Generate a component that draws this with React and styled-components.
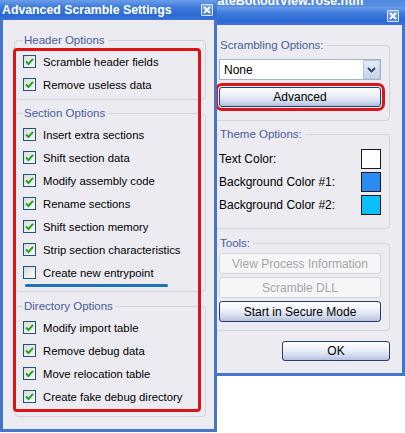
import React from 'react';
import styled, { createGlobalStyle } from 'styled-components';

const GlobalStyle = createGlobalStyle`
	html, body {
		margin: 0;
		padding: 0;
		background: #fff;
		overflow: hidden;
	}
	body {
		font-family: "Liberation Sans", Arial, sans-serif;
		font-size: 12px;
		color: #000;
	}
`;

const Desktop = styled.div`
	position: relative;
	width: 405px;
	height: 433px;
	overflow: hidden;
	background: #fff;
`;

const Window = styled.div`
	position: absolute;
	left: ${p => p.$left}px;
	top: ${p => p.$top}px;
	width: ${p => p.$width}px;
	height: ${p => p.$height}px;
	z-index: ${p => p.$z};
	display: flex;
	flex-direction: column;
`;

const TitleBar = styled.div`
	flex: 0 0 ${p => p.$h}px;
	display: flex;
	align-items: center;
	justify-content: space-between;
	padding: 0 ${p => p.$pr}px 0 2px;
	background: linear-gradient(#6a9ee9 0%, #3f7bdc 35%, #2d69d3 75%, #3a74d8 100%);
	color: #fff;
	font-weight: bold;
	font-size: 12.3px;
	white-space: nowrap;
	overflow: hidden;
`;

const BackTitle = styled(TitleBar)`
	align-items: flex-end;
	padding: 0 0 1px 14px;
	background: linear-gradient(#3f7bdc, #5b90e2);
	font-size: 12.5px;
	line-height: 12px;
`;

const CloseBtn = styled.span`
	width: 12px;
	height: 12px;
	flex: 0 0 12px;
	display: flex;
	align-items: center;
	justify-content: center;
	box-sizing: border-box;
	border: 1px solid #dde8fb;
	border-radius: 1px;
	background: linear-gradient(#7fa7ea, #4a7fdc);
`;

const Body = styled.div`
	flex: 1;
	display: flex;
	flex-direction: column;
	position: relative;
	background: #ecebf1;
	border: 3px solid #4576c9;
	border-top: none;
	padding: ${p => p.$pt}px ${p => p.$pr}px 0 ${p => p.$pl}px;
`;

const Group = styled.fieldset`
	margin: ${p => p.$mt || 0}px 0 0;
	padding: ${p => p.$pt || 0}px 8px ${p => p.$pb}px 8px;
	border: 1px solid #d3d2db;
	border-radius: 4px;
	min-width: 0;
	display: flex;
	flex-direction: column;
`;

const Legend = styled.legend`
	padding: 0 3px 0 1px;
	margin: 0;
	color: #4a5d99;
	font-size: 11.5px;
	line-height: 14px;
`;

const CheckRow = styled.div`
	display: flex;
	align-items: center;
	gap: 7px;
	height: 23px;
	font-size: 11.3px;
	white-space: nowrap;
`;

const Box = styled.span`
	width: 13px;
	height: 13px;
	flex: 0 0 13px;
	box-sizing: border-box;
	border: 1px solid #1f5382;
	background: linear-gradient(135deg, #dcdcd6, #fbfbf9);
	display: flex;
	align-items: center;
	justify-content: center;
`;

const Underline = styled.div`
	width: 143px;
	height: 3px;
	margin: 0 0 4px 2px;
	border-radius: 2px;
	background: #2172b5;
`;

const Highlight = styled.div`
	position: absolute;
	left: ${p => p.$l}px;
	top: ${p => p.$t}px;
	width: ${p => p.$w}px;
	height: ${p => p.$h}px;
	box-sizing: border-box;
	border: 3px solid #dc1414;
	border-radius: 4px;
	pointer-events: none;
`;

const Select = styled.div`
	height: 21px;
	margin-top: 7px;
	box-sizing: border-box;
	border: 1px solid #a5b4cc;
	background: #fff;
	display: flex;
	align-items: center;
	justify-content: space-between;
	padding: 0 0 0 4px;
	font-size: 12px;
`;

const DropBtn = styled.span`
	width: 17px;
	height: 19px;
	box-sizing: border-box;
	border: 1px solid #b9c7de;
	background: linear-gradient(#e4ebf7, #c6d3ea);
	display: flex;
	align-items: center;
	justify-content: center;
`;

const Button = styled.div`
	height: ${p => p.$h || 20}px;
	box-sizing: border-box;
	border: 1px solid ${p => (p.$disabled ? '#d6d6da' : '#2b3d66')};
	border-radius: 3px;
	background: ${p => (p.$disabled ? '#f6f6f8' : 'linear-gradient(#ffffff 0%, #eef1f8 40%, #d2dbed 75%, #b3c1de 100%)')};
	color: ${p => (p.$disabled ? '#a5a5a8' : '#000')};
	display: flex;
	align-items: center;
	justify-content: center;
	font-size: 12px;
	margin-top: ${p => p.$mt || 0}px;
	${p => p.$marked && `
		outline: 3px solid #d81818;
		outline-offset: 1px;
	`}
`;

const OkButton = styled(Button)`
	width: 108px;
	align-self: flex-end;
`;

const ColorRow = styled.div`
	display: flex;
	align-items: center;
	justify-content: space-between;
	height: 23px;
	font-size: 12px;
`;

const Swatch = styled.span`
	width: 20px;
	height: 20px;
	box-sizing: border-box;
	border: 1px solid #1a1a1a;
	background: ${p => p.$color};
`;

const Check = () => (
	<svg width="9" height="9" viewBox="0 0 9 9">
		<path d="M1 4.5 L3.5 7 L8 1.8" fill="none" stroke="#22a522" strokeWidth="2" />
	</svg>
);

const Close = () => (
	<CloseBtn>
		<svg width="8" height="8" viewBox="0 0 8 8">
			<path d="M1 1 L7 7 M7 1 L1 7" stroke="#fff" strokeWidth="1.8" />
		</svg>
	</CloseBtn>
);

const Option = ({ label, checked }) => (
	<CheckRow>
		<Box>{checked && <Check />}</Box>
		{label}
	</CheckRow>
);

const headerOptions = ['Scramble header fields', 'Remove useless data'];
const sectionOptions = [
	['Insert extra sections', true],
	['Shift section data', true],
	['Modify assembly code', true],
	['Rename sections', true],
	['Shift section memory', true],
	['Strip section characteristics', true],
	['Create new entrypoint', false],
];
const directoryOptions = ['Modify import table', 'Remove debug data', 'Move relocation table', 'Create fake debug directory'];

const colors = [
	['Text Color:', '#ffffff'],
	['Background Color #1:', '#2a8bf2'],
	['Background Color #2:', '#0dbff8'],
];

export default function App() {
	return (
		<Desktop>
			<GlobalStyle />

			<Window $left={180} $top={-14} $width={260} $height={40} $z={0}>
				<BackTitle $h={21}>c:\KateBot\outView.rose.htm</BackTitle>
			</Window>

			<Window $left={196} $top={7} $width={209} $height={369} $z={1}>
				<TitleBar $h={18} $pr={6}>
					<span />
					<Close />
				</TitleBar>
				<Body $pt={13} $pl={11} $pr={12}>
					<Group $pt={0} $pb={13}>
						<Legend>Scrambling Options:</Legend>
						<Select>
							None
							<DropBtn>
								<svg width="9" height="6" viewBox="0 0 9 6">
									<path d="M1 1 L4.5 4.5 L8 1" fill="none" stroke="#2c3f6b" strokeWidth="1.8" />
								</svg>
							</DropBtn>
						</Select>
						<Button $mt={7} $marked>Advanced</Button>
					</Group>
					<Group $mt={6} $pt={6} $pb={12}>
						<Legend>Theme Options:</Legend>
						{colors.map(([label, c]) => (
							<ColorRow key={label}>
								{label}
								<Swatch $color={c} />
							</ColorRow>
						))}
					</Group>
					<Group $mt={7} $pt={3} $pb={8}>
						<Legend>Tools:</Legend>
						<Button $h={21} $disabled>View Process Information</Button>
						<Button $h={21} $mt={3} $disabled>Scramble DLL</Button>
						<Button $h={21} $mt={3}>Start in Secure Mode</Button>
					</Group>
					<OkButton $mt={10}>OK</OkButton>
				</Body>
			</Window>

			<Window $left={0} $top={0} $width={217} $height={432} $z={2}>
				<TitleBar $h={20} $pr={4}>
					Advanced Scramble Settings
					<Close />
				</TitleBar>
				<Body $pt={13} $pl={11} $pr={8}>
					<Group $pt={3} $pb={3}>
						<Legend>Header Options</Legend>
						{headerOptions.map(o => <Option key={o} label={o} checked />)}
					</Group>
					<Group $mt={6} $pt={3} $pb={0}>
						<Legend>Section Options</Legend>
						{sectionOptions.map(([o, c]) => <Option key={o} label={o} checked={c} />)}
						<Underline />
					</Group>
					<Group $mt={7} $pt={3} $pb={8}>
						<Legend>Directory Options</Legend>
						{directoryOptions.map(o => <Option key={o} label={o} checked />)}
					</Group>
					<Highlight $l={10} $t={28} $w={188} $h={364} />
				</Body>
			</Window>
		</Desktop>
	);
}
